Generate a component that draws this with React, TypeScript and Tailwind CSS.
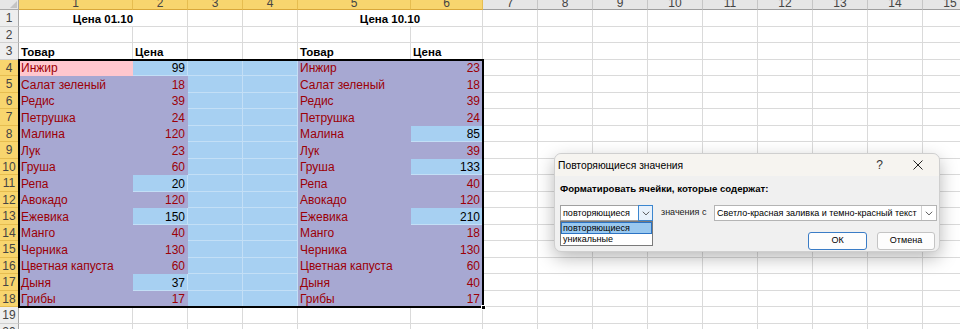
const LEFT = [
  ["Инжир", 99],
  ["Салат зеленый", 18],
  ["Редис", 39],
  ["Петрушка", 24],
  ["Малина", 120],
  ["Лук", 23],
  ["Груша", 60],
  ["Репа", 20],
  ["Авокадо", 120],
  ["Ежевика", 150],
  ["Манго", 40],
  ["Черника", 130],
  ["Цветная капуста", 60],
  ["Дыня", 37],
  ["Грибы", 17],
] as const

const RIGHT = [
  ["Инжир", 23],
  ["Салат зеленый", 18],
  ["Редис", 39],
  ["Петрушка", 24],
  ["Малина", 85],
  ["Лук", 39],
  ["Груша", 133],
  ["Репа", 40],
  ["Авокадо", 120],
  ["Ежевика", 210],
  ["Манго", 18],
  ["Черника", 130],
  ["Цветная капуста", 60],
  ["Дыня", 40],
  ["Грибы", 17],
] as const

const ALL_PRICES = [...LEFT.map((r) => r[1]), ...RIGHT.map((r) => r[1])]
const isDup = (v: number) => ALL_PRICES.filter((p) => p === v).length > 1

const COL_COUNT = 15
const ROW_COUNT = 20

type Kind = "white" | "blue" | "purple" | "pink"

const KIND_CLASS: Record<Kind, string> = {
  white: "bg-white border-[#dadada]",
  blue: "bg-[#a7d0f2] border-[#c3dff6]",
  purple: "bg-[#a7a8d2] border-[#a7a8d2]",
  pink: "bg-[#ffc7ce] border-[#ffc7ce]",
}

function Cell({
  kind = "white",
  children,
  align = "left",
  red,
  bold,
}: {
  kind?: Kind
  children?: React.ReactNode
  align?: "left" | "right"
  red?: boolean
  bold?: boolean
}) {
  return (
    <div
      className={`flex items-end overflow-hidden whitespace-nowrap border-r border-b px-[2px] leading-[13px] ${KIND_CLASS[kind]} ${
        align === "right" ? "justify-end" : "justify-start"
      } ${red ? "text-[#9c0006]" : "text-black"} ${bold ? "font-bold" : ""}`}
    >
      {children}
    </div>
  )
}

function dataCells(row: number) {
  const i = row - 4
  const l = LEFT[i]
  const r = RIGHT[i]
  const lDup = isDup(l[1])
  const rDup = isDup(r[1])
  const cells = [
    <Cell key="c1" kind={row === 4 ? "pink" : "purple"} red>
      {l[0]}
    </Cell>,
    <Cell key="c2" kind={lDup ? "purple" : "blue"} align="right" red={lDup}>
      {l[1]}
    </Cell>,
    <Cell key="c3" kind="blue" />,
    <Cell key="c4" kind="blue" />,
    <Cell key="c5" kind="purple" red>
      {r[0]}
    </Cell>,
    <Cell key="c6" kind={rDup ? "purple" : "blue"} align="right" red={rDup}>
      {r[1]}
    </Cell>,
  ]
  for (let c = 7; c <= COL_COUNT; c++) cells.push(<Cell key={`c${c}`} />)
  return cells
}

function rowCells(row: number) {
  if (row >= 4 && row <= 18) return dataCells(row)
  if (row === 1) {
    const cells = [
      <div key="t1" className="col-span-2 flex items-end justify-center border-b border-r border-[#dadada] text-[11.5px] font-bold leading-[13px]">
        Цена 01.10
      </div>,
      <Cell key="c3" />,
      <Cell key="c4" />,
      <div key="t2" className="col-span-2 flex items-end justify-center border-b border-r border-[#dadada] text-[11.5px] font-bold leading-[13px]">
        Цена 10.10
      </div>,
    ]
    for (let c = 7; c <= COL_COUNT; c++) cells.push(<Cell key={`c${c}`} />)
    return cells
  }
  if (row === 3) {
    const labels: Record<number, string> = { 1: "Товар", 2: "Цена", 5: "Товар", 6: "Цена" }
    return Array.from({ length: COL_COUNT }, (_, k) => (
      <Cell key={`c${k + 1}`} bold>
        <span className="text-[11.5px]">{labels[k + 1]}</span>
      </Cell>
    ))
  }
  return Array.from({ length: COL_COUNT }, (_, k) => <Cell key={`c${k + 1}`} />)
}

function Chevron() {
  return (
    <svg viewBox="0 0 10 6" className="h-[5px] w-[8px]" fill="none" stroke="#333" strokeWidth="1">
      <path d="M1 0.8 L5 4.8 L9 0.8" />
    </svg>
  )
}

function Dialog() {
  return (
    <div className="absolute left-[554px] top-[153px] flex h-[99px] w-[386px] flex-col whitespace-nowrap rounded-[7px] border border-[#cfcfcf] bg-[#f0f0f0] text-[9px] text-black shadow-[0_6px_18px_rgba(0,0,0,0.28)]">
      <div className="flex h-[22px] items-center rounded-t-[7px] bg-[#f6f4f0] pl-[3px] text-[10.3px]">
        <span className="mt-[1px]">Повторяющиеся значения</span>
        <span className="ml-auto mr-[30px] text-[12px] text-[#333]">?</span>
        <svg viewBox="0 0 10 10" className="mr-[16px] h-[10px] w-[10px]" stroke="#222" strokeWidth="1">
          <path d="M0.5 0.5 L9.5 9.5 M9.5 0.5 L0.5 9.5" />
        </svg>
      </div>
      <div className="flex flex-1 flex-col pl-[5px] pr-[2px]">
        <div className="mt-[6px] text-[9.6px] font-bold leading-[13px]">Форматировать ячейки, которые содержат:</div>
        <div className="mt-[10px] flex h-[16px] items-center">
          <div className="relative flex h-[16px] w-[93px] items-center border border-[#a0a0a0] bg-white">
            <span className="pl-[2px] leading-[14px]">повторяющиеся</span>
            <div className="-mr-px ml-auto flex h-[16px] w-[15px] items-center justify-center border border-[#3b86cf] bg-[#e8f1fb]">
              <Chevron />
            </div>
            <div className="absolute left-[-1px] top-[15px] flex w-[93px] flex-col border border-[#7a7a7a] bg-white leading-[10px]">
              <span className="border border-[#2b73c4] bg-[#99c8ef] pl-[1px]">повторяющиеся</span>
              <span className="pb-[1px] pl-[2px]">уникальные</span>
            </div>
          </div>
          <span className="ml-[8px] text-[#222]">значения с</span>
          <div className="ml-auto flex h-[16px] w-[223px] items-center border border-[#b4b4b4] bg-white">
            <span className="pl-[2px] leading-[14px]">Светло-красная заливка и темно-красный текст</span>
            <div className="ml-auto flex h-[14px] w-[15px] items-center justify-center border-l border-[#d0d0d0]">
              <Chevron />
            </div>
          </div>
        </div>
        <div className="mt-[11px] flex justify-end gap-[10px] pr-[2px]">
          <div className="flex h-[18px] w-[59px] items-center justify-center rounded-[3px] border border-[#3a7cc6] bg-[#fdfdfd]">
            ОК
          </div>
          <div className="flex h-[18px] w-[58px] items-center justify-center rounded-[3px] border border-[#c4c4c4] bg-[#fdfdfd]">
            Отмена
          </div>
        </div>
      </div>
    </div>
  )
}

export default function App() {
  const rows = Array.from({ length: ROW_COUNT }, (_, k) => k + 1)
  return (
    <div
      className="relative h-[329px] w-[960px] overflow-hidden bg-white text-[12px]"
      style={{ fontFamily: '"Liberation Sans", Arial, sans-serif' }}
    >
      <div className="grid grid-cols-[19px_114px_55px_55px_55px_113px_72px_repeat(9,55px)] grid-rows-[10px_repeat(20,16.5px)]">
        {/* header row */}
        <div className="relative border-b border-r border-[#a8a8a8] bg-[#e6e6e6]">
          <div className="absolute bottom-[1px] right-[1px] h-0 w-0 border-b-[7px] border-l-[7px] border-b-[#c4c4c4] border-l-transparent" />
        </div>
        {Array.from({ length: COL_COUNT }, (_, k) => (
          <div
            key={`h${k}`}
            className={`flex items-end justify-center overflow-hidden border-b border-r text-[12px] leading-[11px] text-[#444] ${
              k < 6 ? "border-r-[#e6bd50] border-b-[#d9a73a] bg-[#f8d56e]" : "border-r-[#c6c6c6] border-b-[#9e9e9e] bg-[#e6e6e6]"
            }`}
          >
            {k + 1}
          </div>
        ))}
        {rows.map((row) => {
          const sel = row >= 4 && row <= 18
          return [
            <div
              key={`r${row}`}
              className={`flex items-center justify-center border-b border-r pt-[1px] text-[12px] text-[#444] ${
                sel ? "border-b-[#e6bd50] border-r-[#d9a73a] bg-[#f8d56e]" : "border-b-[#d0d0d0] border-r-[#a8a8a8] bg-[#eeeeee]"
              }`}
            >
              {row}
            </div>,
            ...rowCells(row).map((c, i) => (
              <div key={`${row}-${i}`} className="contents">
                {c}
              </div>
            )),
          ]
        })}
      </div>

      {/* selection outline */}
      <div className="pointer-events-none absolute left-[18px] top-[58.5px] h-[249.5px] w-[466px] border-2 border-black" />
      <div className="absolute left-[481px] top-[305px] h-[5px] w-[5px] border border-white bg-black" />

      <Dialog />
    </div>
  )
}
